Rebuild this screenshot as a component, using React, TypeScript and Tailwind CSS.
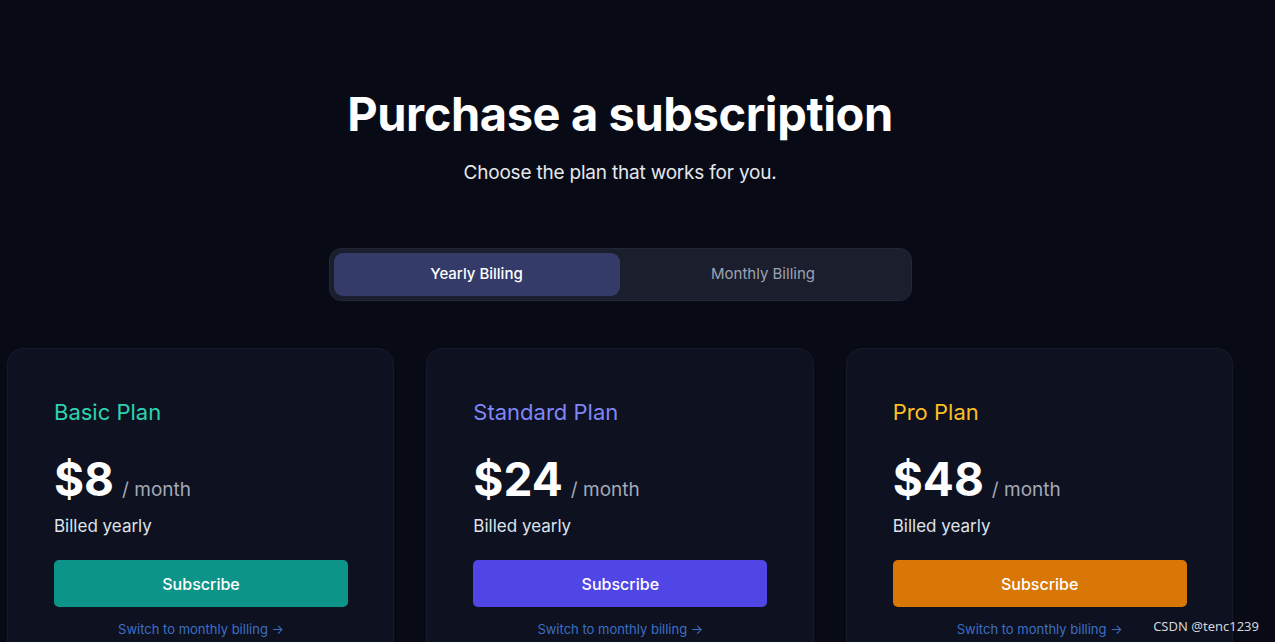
const plans = [
  { name: "Basic Plan", price: "$8", nameColor: "text-[#2dd4b0]", button: "bg-[#0d9488]" },
  { name: "Standard Plan", price: "$24", nameColor: "text-[#7f86f7]", button: "bg-[#4f46e5]" },
  { name: "Pro Plan", price: "$48", nameColor: "text-[#fbbf24]", button: "bg-[#d97706]" },
];

const App = () => {
  return (
    <div
      className="relative w-full h-[642px] overflow-hidden bg-[#080b16] text-white"
      style={{ fontFamily: "Inter, 'Noto Sans', sans-serif" }}
    >
      <div className="w-[1240px] flex flex-col items-center">
        {/* Header */}
        <h1 className="mt-[84px] text-[47px] leading-[60px] font-bold tracking-[-0.4px]">
          Purchase a subscription
        </h1>
        <p className="mt-[15px] text-[19px] leading-[28px] text-[#e5e7eb] tracking-[-0.2px]">
          Choose the plan that works for you.
        </p>

        {/* Billing toggle */}
        <div className="mt-[61px] w-[583px] h-[53px] p-[4px] rounded-[12px] bg-[#1a1e2d] border border-[#222738] flex">
          <button className="w-[286px] h-full rounded-[9px] bg-[#353b69] text-[15px] font-medium text-white">
            Yearly Billing
          </button>
          <button className="flex-1 h-full text-[15px] text-[#9ca3b4]">
            Monthly Billing
          </button>
        </div>

        {/* Plans */}
        <div className="mt-[47px] w-full px-[7px] grid grid-cols-3 gap-x-[32px]">
          {plans.map((plan) => (
            <div
              key={plan.name}
              className="h-[320px] rounded-[16px] bg-[#0d1120] border border-[#161b2b] px-[46px] pt-[47px]"
            >
              <h3 className={`text-[22px] leading-[32px] ${plan.nameColor}`}>{plan.name}</h3>
              <div className="mt-[23px] flex items-baseline">
                <span className="text-[46px] leading-[56px] font-bold">{plan.price}</span>
                <span className="ml-[8px] text-[19px] text-[#a3aab8]">/ month</span>
              </div>
              <p className="mt-[6px] text-[17px] leading-[26px] text-[#dfe3ec]">Billed yearly</p>
              <button
                className={`mt-[21px] w-[294px] h-[47px] rounded-[5px] ${plan.button} text-[16px] font-medium text-white`}
              >
                Subscribe
              </button>
              <p className="mt-[13px] w-[294px] text-center text-[13px] text-[#3d6fc4]">
                Switch to monthly billing →
              </p>
            </div>
          ))}
        </div>
      </div>

      <span className="absolute right-[16px] bottom-[6px] text-[13px] text-[#d1d5db]" style={{ fontFamily: "'Noto Sans', sans-serif" }}>
        CSDN @tenc1239
      </span>
    </div>
  );
};

export default App;
